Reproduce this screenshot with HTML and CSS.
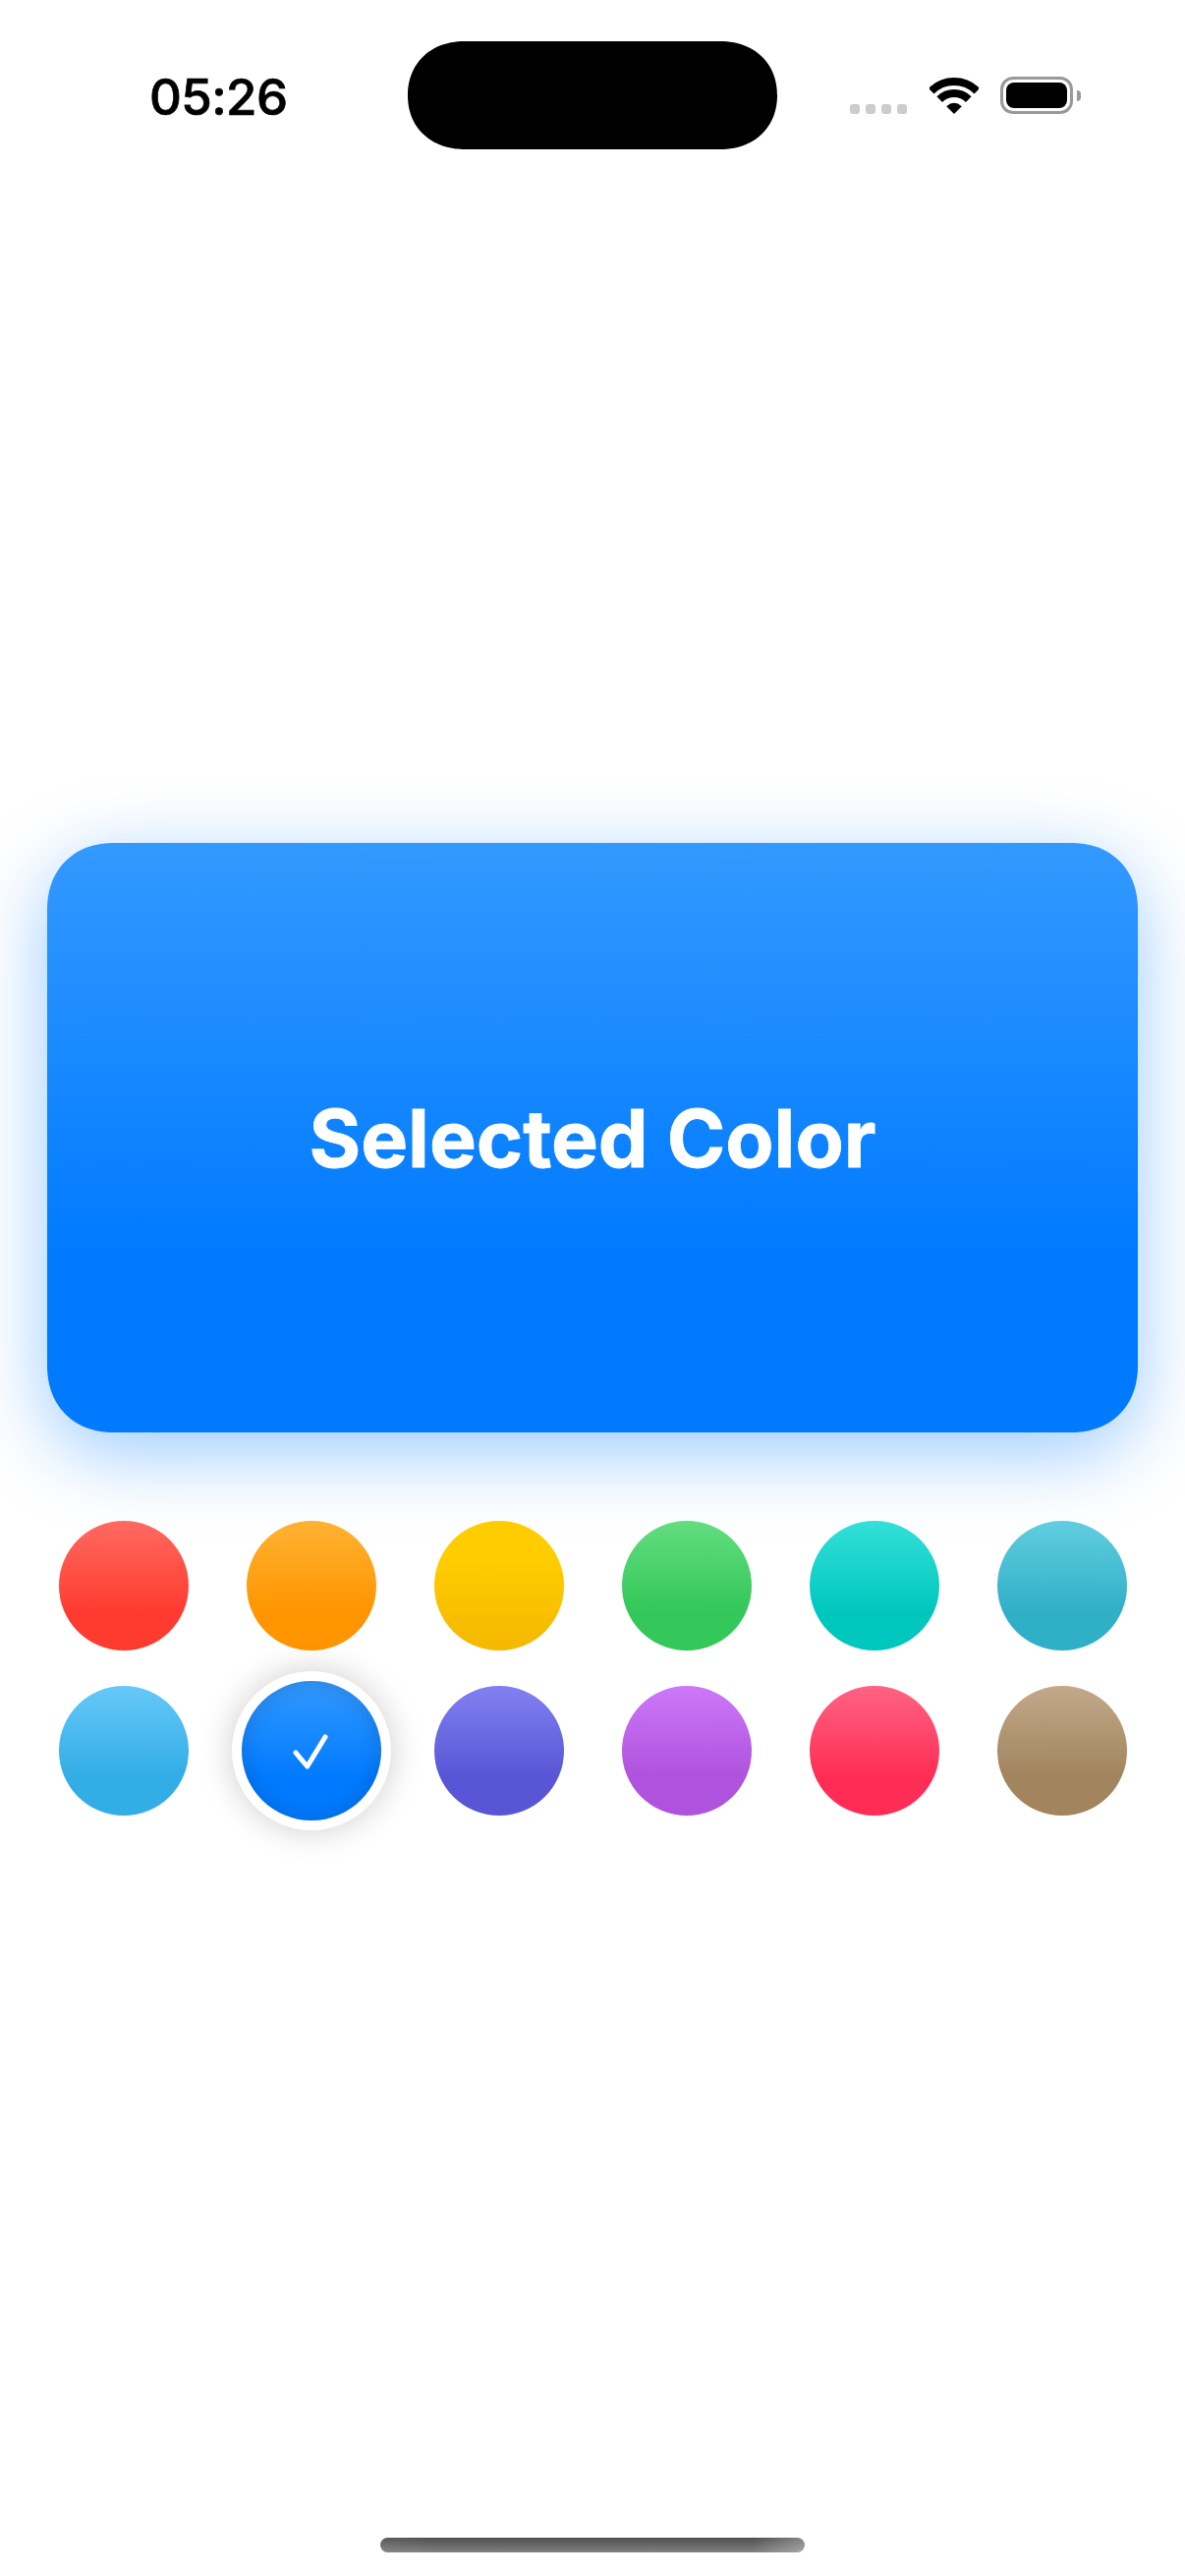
FILE: index.html
```html
<!DOCTYPE html>
<html lang="en">
<head>
<meta charset="utf-8">
<title>Selected Color</title>
<link rel="stylesheet" href="styles.css">
</head>
<body>
<div class="page">
  <header class="status">
    <div class="time">05:26</div>
    <div class="island"></div>
    <div class="indicators">
      <div class="signal"><i></i><i></i><i></i><i></i></div>
      <svg class="wifi" width="50" height="37" viewBox="0 0 50 37">
        <path d="M1.7 13.7A33 33 0 0 1 48.3 13.7" fill="none" stroke="#000" stroke-width="8"/>
        <path d="M10.2 22.2A21 21 0 0 1 39.8 22.2" fill="none" stroke="#000" stroke-width="8"/>
        <path d="M25 37L17.2 29.2Q25 22.5 32.8 29.2Z" fill="#000"/>
      </svg>
      <div class="battery"><div class="battery-fill"></div></div>
      <div class="battery-cap"></div>
    </div>
  </header>
  <main class="content">
    <section class="card">Selected Color</section>
    <div class="swatches">
      <div class="slot"><div class="swatch red"></div></div>
      <div class="slot"><div class="swatch orange"></div></div>
      <div class="slot"><div class="swatch yellow"></div></div>
      <div class="slot"><div class="swatch green"></div></div>
      <div class="slot"><div class="swatch mint"></div></div>
      <div class="slot"><div class="swatch teal"></div></div>
      <div class="slot"><div class="swatch sky"></div></div>
      <div class="slot">
        <div class="swatch blue selected">
          <svg class="check" width="42" height="42" viewBox="0 0 42 42">
            <path d="M5 23L16.7 37L35 7" fill="none" stroke="#fff" stroke-width="5" stroke-linecap="round" stroke-linejoin="round"/>
          </svg>
        </div>
      </div>
      <div class="slot"><div class="swatch indigo"></div></div>
      <div class="slot"><div class="swatch purple"></div></div>
      <div class="slot"><div class="swatch pink"></div></div>
      <div class="slot"><div class="swatch brown"></div></div>
    </div>
  </main>
  <div class="home-bar"></div>
</div>
</body>
</html>
```
FILE: styles.css
```css
* { box-sizing: border-box; }
html, body { margin: 0; padding: 0; background: #fff; }
.page {
  width: 1206px;
  height: 2622px;
  display: flex;
  flex-direction: column;
  align-items: center;
  font-family: Inter, "Liberation Sans", sans-serif;
  overflow: hidden;
}
.status {
  width: 100%;
  height: 152px;
  padding: 42px 0 0 152px;
  display: flex;
  align-items: flex-start;
}
.time {
  flex: none;
  width: 263px;
  margin-top: 29px;
  font-size: 51px;
  line-height: 56px;
  font-weight: 500;
  letter-spacing: -0.6px;
  -webkit-text-stroke: 0.7px #000;
  color: #000;
}
.island {
  flex: none;
  width: 376px;
  height: 110px;
  background: #000;
  border-radius: 58px / 55px;
  corner-shape: superellipse(1.1);
}
.indicators {
  flex: none;
  margin-left: 74px;
  margin-top: 36px;
  display: flex;
  align-items: flex-end;
}
.signal { display: flex; gap: 6px; margin-right: 23px; }
.signal i { width: 10px; height: 10px; border-radius: 3px; background: #ccc; }
.wifi { display: block; margin-right: 22px; }
.battery {
  width: 74px;
  height: 38px;
  border: 3px solid #999;
  border-radius: 13px;
  padding: 3px;
  background: #fff;
}
.battery-fill { width: 100%; height: 100%; background: #000; border-radius: 8px; }
.battery-cap {
  width: 4px;
  height: 11px;
  margin: 0 0 13px 4px;
  background: #999;
  border-radius: 0 5px 5px 0;
}
.content {
  width: 1110px;
  flex: 1;
  padding-top: 706px;
  display: flex;
  flex-direction: column;
}
.card {
  height: 600px;
  border-radius: 68px;
  corner-shape: superellipse(1.12);
  background: linear-gradient(180deg, #3399ff 0%, #007aff 70%);
  box-shadow: 0 20px 80px rgba(0, 122, 255, 0.4);
  color: #fff;
  font-size: 80.5px;
  font-weight: 700;
  -webkit-text-stroke: 0.8px #fff;
  display: flex;
  align-items: center;
  justify-content: center;
}
.swatches {
  margin: 90px 0 0 12px;
  width: 1087px;
  display: grid;
  grid-template-columns: repeat(6, 132px);
  justify-content: space-between;
  row-gap: 36px;
}
.slot { width: 132px; height: 132px; }
.swatch {
  width: 132px;
  height: 132px;
  border-radius: 50%;
  background: linear-gradient(180deg, var(--top) 0%, var(--base) 70%);
}
.red { --top: #ff6a60; --base: #ff3b30; }
.orange { --top: #ffb233; --base: #ff9500; }
.yellow { background: linear-gradient(180deg, #ffcc00 30%, #f4b800 100%); }
.green { --top: #63dd80; --base: #34c759; }
.mint { --top: #33e0d8; --base: #00c7be; }
.teal { --top: #62cde0; --base: #30b0c7; }
.sky { --top: #66c8f8; --base: #32ade6; }
.blue { --top: #3399ff; --base: #007aff; }
.indigo { --top: #8280f0; --base: #5856d6; }
.purple { --top: #cc78f8; --base: #af52de; }
.pink { --top: #ff6384; --base: #ff2d55; }
.brown { --top: #c2a98a; --base: #a2845e; }
.selected {
  width: 142px;
  height: 142px;
  margin: -5px;
  display: flex;
  align-items: center;
  justify-content: center;
  box-shadow:
    0 0 0 10px #fff,
    0 0 34px 10px rgba(0, 0, 0, 0.2),
    inset 0 0 22px rgba(0, 0, 0, 0.16);
}
.check { display: block; flex: none; }
.home-bar {
  flex: none;
  width: 432px;
  height: 15px;
  margin-bottom: 24px;
  border-radius: 8px;
  background:
    linear-gradient(90deg, rgba(255, 255, 255, 0.06) 0%, rgba(255, 255, 255, 0) 12%, rgba(255, 255, 255, 0) 88%, rgba(255, 255, 255, 0.3) 100%),
    linear-gradient(180deg, #505050, #808080);
}
```
